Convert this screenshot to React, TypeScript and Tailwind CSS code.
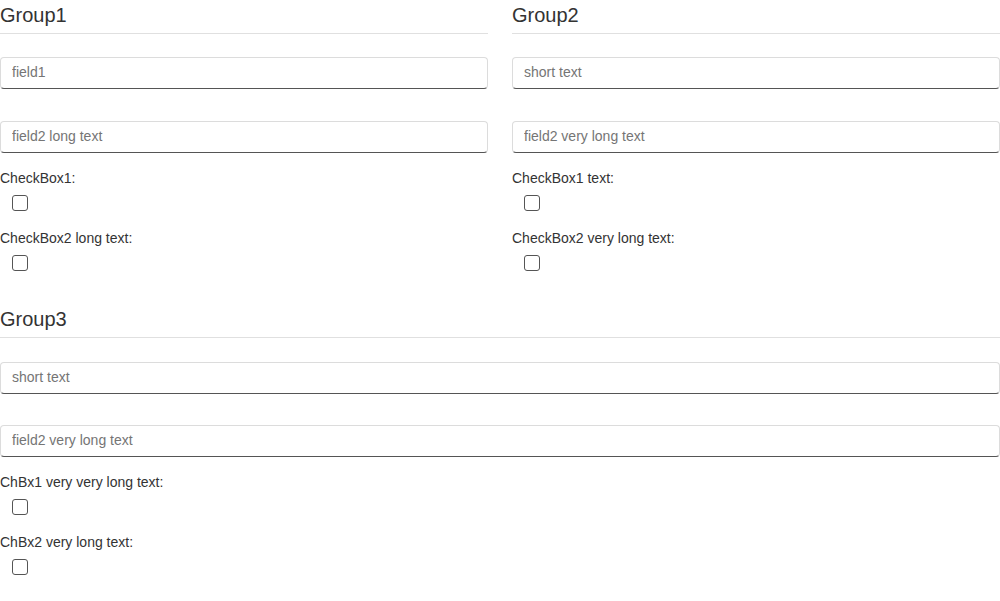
import React from "react";

type Field = { placeholder: string };
type Check = { label: string };

const Input = ({ placeholder }: Field) => (
  <input
    type="text"
    placeholder={placeholder}
    className="block w-full h-[32px] px-[11px] pb-[2px] text-[14px] text-[#333] placeholder:text-[#757575] bg-white border border-[#dcdcdc] border-b-[#555] rounded-[4px] outline-none"
  />
);

const CheckRow = ({ label }: Check) => (
  <div>
    <div className="text-[14px] leading-[20px] text-[#333]">{label}</div>
    <div className="pl-[12px] pt-[7px]">
      <input
        type="checkbox"
        className="block appearance-none w-[16px] h-[16px] m-0 border border-[#555] rounded-[3px] bg-white"
      />
    </div>
  </div>
);

const Group = ({ title, fields, checks, wide }: { title: string; fields: string[]; checks: string[]; wide?: boolean }) => (
  <div>
    {/* header */}
    <div className="h-[34px] border-b border-[#e0e0e0] pt-[1px] text-[20px] leading-[28px] text-[#333]">{title}</div>
    <div className={wide ? "pt-[24px]" : "pt-[23px]"}>
      <Input placeholder={fields[0]} />
      <div className={wide ? "pt-[31px]" : "pt-[32px]"}>
        <Input placeholder={fields[1]} />
      </div>
      <div className="pt-[15px]">
        <CheckRow label={checks[0]} />
      </div>
      <div className="pt-[17px]">
        <CheckRow label={checks[1]} />
      </div>
    </div>
  </div>
);

export default function App() {
  return (
    <div className="w-[1000px] h-[601px] bg-white font-['Liberation_Sans',Arial,sans-serif]">
      <div className="grid grid-cols-2 gap-x-[24px]">
        <Group title="Group1" fields={["field1", "field2 long text"]} checks={["CheckBox1:", "CheckBox2 long text:"]} />
        <Group title="Group2" fields={["short text", "field2 very long text"]} checks={["CheckBox1 text:", "CheckBox2 very long text:"]} />
      </div>
      <div className="pt-[33px]">
        <Group wide title="Group3" fields={["short text", "field2 very long text"]} checks={["ChBx1 very very long text:", "ChBx2 very long text:"]} />
      </div>
    </div>
  );
}
